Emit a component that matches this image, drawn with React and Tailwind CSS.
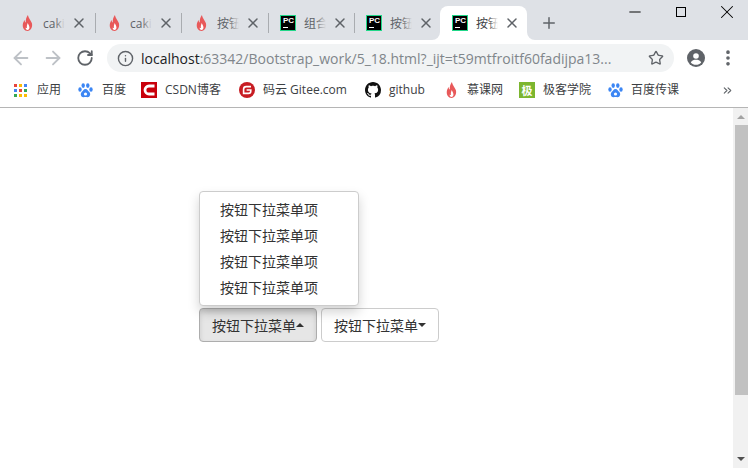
import React from "react";
import { ArrowLeft, ArrowRight, RotateCw, Info, Star, Plus, X, Minus, ChevronsRight, EllipsisVertical } from "lucide-react";

const font = "font-['Open_Sans','Noto_Sans_CJK_SC',sans-serif]";

function Flame() {
  return (
    <div className="w-4 flex justify-center shrink-0">
      <svg width="11" height="16" viewBox="0 0 14 16" preserveAspectRatio="none">
        <path d="M7.5 0 C8 3 11 5 12.5 8 C14 12 11 16 7 16 C3 16 0.5 13 1 9.5 C1.3 7.5 2.5 6 3.3 5 C3.5 6.5 4 7.2 4.8 7.5 C4.5 5 5.5 2 7.5 0 Z" fill="#e8595a" />
        <path d="M7.3 8 C7.8 9.5 9.5 10.5 9.5 12.5 C9.5 14 8.4 15 7 15 C5.6 15 4.5 14 4.6 12.5 C5.2 13 5.8 13.2 6.2 13 C6 11 6.5 9.5 7.3 8 Z" fill="#fff" />
      </svg>
    </div>
  );
}

function PcIcon() {
  return (
    <div className="w-4 h-4 bg-black border border-[#21d789] flex flex-col pl-[2px] shrink-0">
      <span className="text-[8px] leading-[9px] font-bold text-white font-['Liberation_Sans',sans-serif]">PC</span>
      <span className="w-[5px] h-px bg-white mt-[2px]"></span>
    </div>
  );
}

function Paw() {
  return (
    <svg width="15" height="15" viewBox="0 0 15 15" fill="#3c86f4">
      <ellipse cx="2" cy="6.5" rx="1.7" ry="2.2" />
      <ellipse cx="5.2" cy="2.6" rx="1.7" ry="2.3" />
      <ellipse cx="9.8" cy="2.6" rx="1.7" ry="2.3" />
      <ellipse cx="13" cy="6.5" rx="1.7" ry="2.2" />
      <path d="M7.5 6 C9.5 6 10 8 11.5 9.3 C13 11 12 14.5 9.5 14.3 C8.5 14.2 8 14 7.5 14 C7 14 6.5 14.2 5.5 14.3 C3 14.5 2 11 3.5 9.3 C5 8 5.5 6 7.5 6 Z" />
      <circle cx="7.5" cy="11" r="1.6" fill="#fff" />
    </svg>
  );
}

function AppsGrid() {
  const colors = ["#e8453c", "#fbbc05", "#4285f4", "#4285f4", "#e8453c", "#34a853", "#34a853", "#fbbc05", "#fbbc05"];
  return (
    <div className="grid grid-cols-3 gap-[2px] w-[13px]">
      {colors.map((c, i) => (
        <span key={i} className="w-[3px] h-[3px]" style={{ backgroundColor: c }}></span>
      ))}
    </div>
  );
}

function Github() {
  return (
    <svg width="16" height="16" viewBox="0 0 16 16" fill="#111">
      <path d="M8 0C3.58 0 0 3.58 0 8c0 3.54 2.29 6.53 5.47 7.59.4.07.55-.17.55-.38 0-.19-.01-.82-.01-1.49-2.01.37-2.53-.49-2.69-.94-.09-.23-.48-.94-.82-1.13-.28-.15-.68-.52-.01-.53.63-.01 1.08.58 1.23.82.72 1.21 1.87.87 2.33.66.07-.52.28-.87.51-1.07-1.78-.2-3.64-.89-3.64-3.95 0-.87.31-1.59.82-2.15-.08-.2-.36-1.02.08-2.12 0 0 .67-.21 2.2.82.64-.18 1.32-.27 2-.27s1.36.09 2 .27c1.53-1.04 2.2-.82 2.2-.82.44 1.1.16 1.92.08 2.12.51.56.82 1.27.82 2.15 0 3.07-1.87 3.75-3.65 3.95.29.25.54.73.54 1.48 0 1.07-.01 1.93-.01 2.2 0 .21.15.46.55.38A8.01 8.01 0 0 0 16 8c0-4.42-3.58-8-8-8Z" />
    </svg>
  );
}

function CsdnIcon() {
  return (
    <svg width="16" height="16" viewBox="0 0 16 16" className="shrink-0">
      <rect width="16" height="16" fill="#c9000b" />
      <path d="M13.5 4 H8 A4 4 0 0 0 8 12 H13.5" fill="none" stroke="#fff" strokeWidth="2.8" />
    </svg>
  );
}

function GiteeIcon() {
  return (
    <svg width="16" height="16" viewBox="0 0 16 16" className="shrink-0">
      <circle cx="8" cy="8" r="8" fill="#c71d23" />
      <path d="M12 4.6 H7.2 A2.6 2.6 0 0 0 4.6 7.2 V11.4 H9.4 A2.4 2.4 0 0 0 11.8 9 V8 H7.6" fill="none" stroke="#fff" strokeWidth="1.6" />
    </svg>
  );
}

function Tab({ icon, title, active, width, pad }) {
  return (
    <div className={`${width} ${pad} flex items-center h-[34px] shrink-0 relative ${active ? "bg-white rounded-t-lg" : ""}`}>
      {active && (
        <>
          <div className="absolute bottom-0 left-[-8px] w-2 h-2 bg-white">
            <div className="w-2 h-2 bg-[#dee1e6] rounded-br-lg"></div>
          </div>
          <div className="absolute bottom-0 right-[-8px] w-2 h-2 bg-white">
            <div className="w-2 h-2 bg-[#dee1e6] rounded-bl-lg"></div>
          </div>
        </>
      )}
      {icon}
      <div className="ml-[8px] w-[22px] pt-[1px] overflow-hidden relative shrink-0">
        <span className={`block whitespace-nowrap text-[12px] ${active ? "text-[#3c4043]" : "text-[#5f6368]"}`}>{title}</span>
        <div className={`absolute inset-y-0 right-0 w-[10px] bg-gradient-to-r from-transparent ${active ? "to-white" : "to-[#dee1e6]"}`}></div>
      </div>
      <X size={16} strokeWidth={2.2} className="text-[#5f6368] ml-[6px] shrink-0" />
    </div>
  );
}

function Sep() {
  return <span className="w-px h-[20px] mb-[7px] bg-[#a9acb0] shrink-0"></span>;
}

function Bookmark({ icon, label, className }) {
  return (
    <div className={`flex items-center shrink-0 ${className}`}>
      {icon}
      <span className="text-[12px] text-[#3c4043] whitespace-nowrap">{label}</span>
    </div>
  );
}

export default function App() {
  return (
    <div className={`w-[748px] h-[468px] overflow-hidden flex flex-col bg-white ${font}`}>
      {/* tab strip */}
      <div className="h-[40px] bg-[#dee1e6] flex items-end pl-[8px] relative shrink-0">
        <Tab icon={<Flame />} title="cakin" width="w-[87px]" pad="pl-[11px]" />
        <Sep />
        <Tab icon={<Flame />} title="cakin" width="w-[85px]" pad="pl-[10px]" />
        <Sep />
        <Tab icon={<Flame />} title="按钮" width="w-[86px]" pad="pl-[11px]" />
        <Sep />
        <Tab icon={<PcIcon />} title="组合" width="w-[85px]" pad="pl-[11px]" />
        <Sep />
        <Tab icon={<PcIcon />} title="按钮" width="w-[85px]" pad="pl-[11px]" />
        <Tab icon={<PcIcon />} title="按钮" width="w-[87px]" pad="pl-[12px]" active />
        <Plus size={18} strokeWidth={2} className="text-[#5f6368] ml-[13px] mb-[8px]" />
        <div className="absolute right-[-2px] top-0 flex">
          <div className="w-[46px] h-[24px] flex items-center justify-center"><Minus size={18} strokeWidth={1.3} className="text-black" /></div>
          <div className="w-[46px] h-[24px] flex items-center justify-center"><div className="w-[10px] h-[10px] border border-black"></div></div>
          <div className="w-[46px] h-[24px] flex items-center justify-center"><X size={22} strokeWidth={1.1} className="text-black" /></div>
        </div>
      </div>

      {/* toolbar */}
      <div className="h-[28px] mt-[4px] flex items-center pl-[10px] shrink-0">
        <ArrowLeft size={22} strokeWidth={2} className="text-[#bdc1c6]" />
        <ArrowRight size={22} strokeWidth={2} className="text-[#bdc1c6] ml-[10px]" />
        <RotateCw size={18} strokeWidth={2.4} className="text-[#5f6368] ml-[12px]" />
        <div className="ml-[13px] w-[567px] h-[28px] rounded-full bg-[#f1f3f4] flex items-center pl-[10px] pr-[10px]">
          <Info size={17} className="text-[#5f6368] shrink-0" />
          <span className="ml-[7px] text-[14px] whitespace-nowrap text-[#80868b]"><span className="text-[#202124]">localhost</span>:63342/Bootstrap_work/5_18.html?_ijt=t59mtfroitf60fadijpa13...</span>
          <Star size={16} strokeWidth={2} className="text-[#5f6368] ml-auto shrink-0" />
        </div>
        <svg width="18" height="18" viewBox="0 0 18 18" className="ml-[13px] shrink-0">
          <circle cx="9" cy="9" r="9" fill="#5f6368" />
          <circle cx="9" cy="7" r="2.8" fill="#fff" />
          <path d="M3.8 13.5 C5 11.3 7 10.8 9 10.8 C11 10.8 13 11.3 14.2 13.5 C13 15 11 15.8 9 15.8 C7 15.8 5 15 3.8 13.5 Z" fill="#fff" />
        </svg>
        <EllipsisVertical size={20} strokeWidth={2.4} className="text-[#5f6368] ml-[13px] shrink-0" />
      </div>

      {/* bookmarks */}
      <div className="h-[36px] flex items-center pl-[14px] pt-[1px] border-b border-[#b5b5b5] shrink-0 relative">
        <Bookmark icon={<AppsGrid />} label="应用" className="w-[64px] gap-[10px]" />
        <Bookmark icon={<Paw />} label="百度" className="w-[63px] gap-[9px]" />
        <Bookmark icon={<CsdnIcon />} label="CSDN博客" className="w-[98px] gap-[8px]" />
        <Bookmark icon={<GiteeIcon />} label="码云 Gitee.com" className="w-[126px] gap-[8px]" />
        <Bookmark icon={<Github />} label="github" className="w-[78px] gap-[8px]" />
        <Bookmark icon={<Flame />} label="慕课网" className="w-[76px] gap-[8px]" />
        <Bookmark
          icon={<div className="w-4 h-4 bg-[#7cb62f] flex items-center justify-center text-white text-[11px] font-bold leading-none">极</div>}
          label="极客学院"
          className="w-[89px] gap-[8px]"
        />
        <Bookmark icon={<Paw />} label="百度传课" className="gap-[8px]" />
        <ChevronsRight size={13} className="text-[#5f6368] absolute left-[721px]" />
      </div>

      {/* page */}
      <div className="flex-1 flex min-h-0">
        <div className="flex-1 pl-[199px] pt-[200px]">
          <div className="relative flex gap-[4px] text-[14px] text-[#333]">
            <div className="absolute left-0 bottom-[36px] w-[160px] pt-[5px] pb-[4px] bg-white border border-[#ccc] rounded shadow-[0_6px_12px_rgba(0,0,0,0.175)]">
              {[0, 1, 2, 3].map((i) => (
                <div key={i} className="h-[26px] px-[20px] leading-[26px] whitespace-nowrap">按钮下拉菜单项</div>
              ))}
            </div>
            <button className="h-[34px] px-[12px] flex items-center border border-[#adadad] rounded bg-[#e6e6e6] shadow-[inset_0_3px_5px_rgba(0,0,0,0.125)]">
              按钮下拉菜单
              <span className="w-0 h-0 border-x-4 border-x-transparent border-b-4 border-b-[#333]"></span>
            </button>
            <button className="h-[34px] px-[12px] flex items-center border border-[#ccc] rounded bg-white">
              按钮下拉菜单
              <span className="w-0 h-0 border-x-4 border-x-transparent border-t-4 border-t-[#333]"></span>
            </button>
          </div>
        </div>
        {/* scrollbar */}
        <div className="w-[15px] bg-[#f1f1f1] flex flex-col items-center shrink-0">
          <div className="h-[17px] flex items-center justify-center"><span className="w-0 h-0 border-x-[4px] border-x-transparent border-b-[4px] border-b-[#a3a3a3]"></span></div>
          <div className="w-[13px] ml-[2px] h-[270px] bg-[#c1c1c1]"></div>
          <div className="flex-1 flex items-end pb-[7px]"><span className="w-0 h-0 border-x-[4px] border-x-transparent border-t-[4px] border-t-[#505050]"></span></div>
        </div>
      </div>
    </div>
  );
}
